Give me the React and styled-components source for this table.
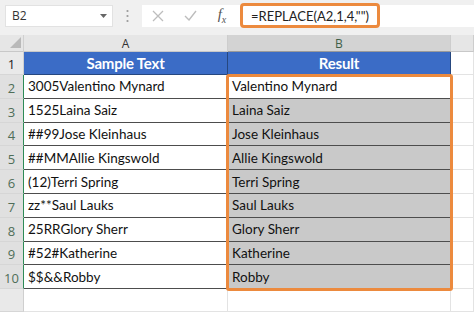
import React from 'react'
import styled, { createGlobalStyle } from 'styled-components'

const GlobalStyle = createGlobalStyle`
  html, body { margin: 0; padding: 0; background: #fff; }
  body { width: 474px; height: 312px; overflow: hidden; }
`

const rows = [
  ['3005Valentino Mynard', 'Valentino Mynard'],
  ['1525Laina Saiz', 'Laina Saiz'],
  ['##99Jose Kleinhaus', 'Jose Kleinhaus'],
  ['##MMAllie Kingswold', 'Allie Kingswold'],
  ['(12)Terri Spring', 'Terri Spring'],
  ['zz**Saul Lauks', 'Saul Lauks'],
  ['25RRGlory Sherr', 'Glory Sherr'],
  ['#52#Katherine', 'Katherine'],
  ['$$&&Robby', 'Robby'],
]

const Page = styled.div`
  width: 474px;
  height: 312px;
  display: flex;
  flex-direction: column;
  background: #f0f0f0;
  font-family: Lato, "Liberation Sans", sans-serif;
`

const FormulaBar = styled.div`
  display: flex;
  align-items: center;
  height: 35px;
  padding: 0 0 4px 5px;
  box-sizing: border-box;
`

const NameBox = styled.div`
  width: 108px;
  height: 22px;
  box-sizing: border-box;
  background: #fff;
  border: 1px solid #e2e2e2;
  display: flex;
  align-items: center;
  justify-content: space-between;
  padding: 0 5px 0 6px;
  font-family: "Open Sans", sans-serif;
  font-size: 12px;
  color: #333;
`

const Grip = styled.div`
  width: 29px;
  display: flex;
  justify-content: center;
`

const FormulaInput = styled.div`
  flex: 1;
  height: 22px;
  background: #fff;
  display: flex;
  align-items: center;
`

const IconSlot = styled.div`
  width: 32px;
  flex: none;
  display: flex;
  justify-content: center;
  align-items: center;
`

const Fx = styled.span`
  font-family: "Liberation Serif", serif;
  font-style: italic;
  font-size: 15px;
  color: #555;
  sub { font-size: 10px; }
`

const FormulaText = styled.div`
  margin-left: 2px;
  height: 25px;
  box-sizing: border-box;
  border: 3px solid #ec8a3e;
  border-radius: 4px;
  padding: 0 8px 0 8px;
  display: flex;
  align-items: center;
  font-size: 13px;
  color: #222;
`

const Sheet = styled.div`
  flex: 1;
  display: flex;
  background: #fff;
  overflow: hidden;
`

const Column = styled.div`
  width: ${p => p.$w};
  flex: ${p => (p.$grow ? 1 : 'none')};
  display: flex;
  flex-direction: column;
`

const Corner = styled.div`
  height: 17px;
  box-sizing: border-box;
  background: #e6e6e6;
  border-right: 1px solid #d0d0d0;
  border-bottom: 1px solid #c8c8c8;
  display: flex;
  align-items: flex-end;
  justify-content: flex-end;
  padding: 0 2px 3px 0;
`

const ColHead = styled.div`
  height: 17px;
  box-sizing: border-box;
  background: ${p => (p.$selected ? '#d3d3d3' : '#e6e6e6')};
  border-right: 1px solid #cdcdcd;
  border-bottom: 1px solid ${p => (p.$selected ? '#9a9a9a' : '#c8c8c8')};
  display: flex;
  align-items: center;
  justify-content: center;
  font-family: "Open Sans", sans-serif;
  font-size: 12px;
  color: ${p => (p.$selected ? '#3f5f48' : '#333')};
`

const RowHead = styled.div`
  height: ${p => p.$h || '23.8px'};
  flex: ${p => (p.$grow ? 1 : 'none')};
  box-sizing: border-box;
  background: ${p => (p.$selected ? '#e0e0e0' : '#e9e9e9')};
  border-right: 1px solid ${p => (p.$selected ? '#2e8b57' : '#cfcfcf')};
  border-bottom: 1px solid #d6d6d6;
  display: flex;
  align-items: flex-end;
  justify-content: center;
  padding-bottom: 1px;
  font-family: "Open Sans", sans-serif;
  font-size: 13px;
  color: ${p => (p.$selected ? '#4f6e58' : '#222')};
`

const HeadCell = styled.div`
  height: 23px;
  box-sizing: border-box;
  background: #3b6cc6;
  color: #fff;
  font-weight: 700;
  font-size: 15px;
  letter-spacing: -0.2px;
  display: flex;
  align-items: center;
  justify-content: center;
  border-right: 1px solid #26477f;
  border-bottom: 1px solid #26477f;
`

const Cell = styled.div`
  height: 23.8px;
  box-sizing: border-box;
  background: ${p => (p.$shaded ? '#c9c9c9' : '#fff')};
  border-right: 1px solid #5a5a5a;
  border-bottom: 1px solid #4d4d4d;
  display: flex;
  align-items: center;
  padding-left: 4px;
  font-size: 13.5px;
  color: #111;
  white-space: nowrap;
  overflow: hidden;
`

const Blank = styled.div`
  height: ${p => p.$h || '23.8px'};
  flex: ${p => (p.$grow ? 1 : 'none')};
  box-sizing: border-box;
  border-right: 1px solid #e3e3e3;
  border-bottom: 1px solid #e3e3e3;
  background: #fff;
`

const SelectionGroup = styled.div`
  position: relative;
  display: flex;
  flex-direction: column;

  &::after {
    content: '';
    position: absolute;
    inset: -1px -2px -2px -2px;
    border: 3px solid #ec8a3e;
    border-radius: 3px;
    pointer-events: none;
  }
`

export default function App() {
  return (
    <Page>
      <GlobalStyle />
      <FormulaBar>
        <NameBox>
          <span>B2</span>
          <svg width="7" height="4" viewBox="0 0 7 4"><path d="M0 0h7L3.5 4z" fill="#666" /></svg>
        </NameBox>
        <Grip>
          <svg width="3" height="14" viewBox="0 0 3 14">
            <circle cx="1.5" cy="2" r="1.1" fill="#9a9a9a" />
            <circle cx="1.5" cy="7" r="1.1" fill="#9a9a9a" />
            <circle cx="1.5" cy="12" r="1.1" fill="#9a9a9a" />
          </svg>
        </Grip>
        <FormulaInput>
          <IconSlot>
            <svg width="12" height="12" viewBox="0 0 12 12"><path d="M1 1l10 10M11 1L1 11" stroke="#bdbdbd" strokeWidth="1.3" /></svg>
          </IconSlot>
          <IconSlot>
            <svg width="13" height="11" viewBox="0 0 13 11"><path d="M1 6l4 4 7-9" stroke="#bdbdbd" strokeWidth="1.4" fill="none" /></svg>
          </IconSlot>
          <IconSlot><Fx>f<sub>x</sub></Fx></IconSlot>
          <FormulaText>=REPLACE(A2,1,4,"")</FormulaText>
        </FormulaInput>
      </FormulaBar>
      <Sheet>
        <Column $w="24px">
          <Corner>
            <svg width="11" height="11" viewBox="0 0 11 11"><path d="M11 0v11H0z" fill="#b9b9b9" /></svg>
          </Corner>
          <RowHead $h="23px">1</RowHead>
          {rows.map((_, i) => (
            <RowHead key={i} $selected>{i + 2}</RowHead>
          ))}
          <RowHead $grow />
        </Column>
        <Column $w="204px">
          <ColHead>A</ColHead>
          <HeadCell>Sample Text</HeadCell>
          {rows.map(([a], i) => (
            <Cell key={i}>{a}</Cell>
          ))}
          <Blank $grow />
        </Column>
        <Column $w="223px">
          <ColHead $selected>B</ColHead>
          <HeadCell>Result</HeadCell>
          <SelectionGroup>
            {rows.map(([, b], i) => (
              <Cell key={i} $shaded={i > 0}>{b}</Cell>
            ))}
          </SelectionGroup>
          <Blank $grow />
        </Column>
        <Column $grow>
          <ColHead />
          <Blank $h="23px" />
          {rows.map((_, i) => (
            <Blank key={i} />
          ))}
          <Blank $grow />
        </Column>
      </Sheet>
    </Page>
  )
}
